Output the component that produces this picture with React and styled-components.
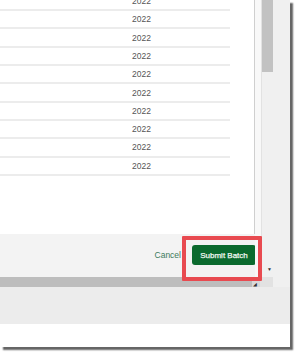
import styled, { createGlobalStyle } from "styled-components";

const GlobalStyle = createGlobalStyle`
    html, body {
        margin: 0;
        padding: 0;
        background: #ffffff;
        font-family: "Liberation Sans", Arial, sans-serif;
    }
`;

const Page = styled.div`
    position: relative;
    width: 300px;
    height: 357px;
    overflow: hidden;
    background: #ffffff;
`;

const Window = styled.div`
    width: 290px;
    height: 347px;
    display: flex;
    flex-direction: column;
    background: #ffffff;
    box-shadow: 3px 3px 1.5px rgba(0, 0, 0, 0.6);
`;

const Top = styled.div`
    display: flex;
    height: 277px;
`;

const Main = styled.div`
    width: 255px;
    display: flex;
    flex-direction: column;
`;

const Panel = styled.div`
    height: 234px;
    background: #ffffff;
    border-right: 1px solid #cfcfcf;
    overflow: hidden;
`;

const Rows = styled.div`
    margin-top: -7.3px;
`;

const Row = styled.div`
    width: 230px;
    height: 18.33px;
    box-sizing: border-box;
    border-bottom: 2px solid #ececec;
    display: flex;
    align-items: center;
    padding-left: 132px;
`;

const Year = styled.span`
    font-size: 8.5px;
    color: #555555;
`;

const Footer = styled.div`
    flex: 1;
    background: #f3f3f3;
    display: flex;
    justify-content: flex-end;
    align-items: center;
    gap: 11px;
    padding-bottom: 1px;
`;

const Cancel = styled.span`
    font-size: 8.5px;
    color: #3c7a5c;
`;

const SubmitButton = styled.button`
    width: 64px;
    height: 20px;
    margin-right: -1px;
    border: none;
    border-radius: 3px;
    background: #0b6a2e;
    color: #f2f8f2;
    font-family: "Liberation Sans", Arial, sans-serif;
    font-size: 8px;
    font-weight: normal;
    -webkit-text-stroke: 0.25px #f2f8f2;
    padding: 0;
`;

const VScroll = styled.div`
    flex: 1;
    display: flex;
    background: #f0f0f0;
`;

const ScrollEdge = styled.div`
    width: 6px;
    background: #f8f8f8;
    border-right: 1px solid #e2e2e2;
`;

const Track = styled.div`
    flex: 1;
    display: flex;
    flex-direction: column;
    justify-content: space-between;
    align-items: flex-start;
    padding-bottom: 5px;
`;

const Thumb = styled.div`
    width: 11px;
    height: 72px;
    background: #c2c2c2;
`;

const Arrow = styled.span`
    font-size: 5px;
    line-height: 5px;
    color: #333333;
    margin-left: ${(p) => p.$left || 0}px;
`;

const HScroll = styled.div`
    height: 10px;
    display: flex;
    background: #f0f0f0;
`;

const HBand = styled.div`
    width: 252px;
    background: #bdbdbd;
`;

const HEnd = styled.div`
    width: 8px;
    background: #d8d8d8;
    display: flex;
    align-items: flex-end;
`;

const Corner = styled.div`
    width: 13px;
    background: #e2e2e2;
`;

const Bottom = styled.div`
    height: 37px;
    background: #ececec;
`;

const Spare = styled.div`
    flex: 1;
    background: #ffffff;
`;

const Highlight = styled.div`
    position: absolute;
    left: 182px;
    top: 236px;
    width: 80px;
    height: 45px;
    box-sizing: border-box;
    border: 4px solid #e84a50;
    border-radius: 1px;
`;

const years = Array.from({ length: 10 }, () => "2022");

export default function App() {
    return (
        <Page>
            <GlobalStyle />
            <Window>
                <Top>
                    <Main>
                        <Panel>
                            <Rows>
                                {years.map((y, i) => (
                                    <Row key={i}>
                                        <Year>{y}</Year>
                                    </Row>
                                ))}
                            </Rows>
                        </Panel>
                        <Footer>
                            <Cancel>Cancel</Cancel>
                            <SubmitButton>Submit Batch</SubmitButton>
                        </Footer>
                    </Main>
                    <VScroll>
                        <ScrollEdge />
                        <Track>
                            <Thumb />
                            <Arrow $left={5}>▼</Arrow>
                        </Track>
                    </VScroll>
                </Top>
                <HScroll>
                    <HBand />
                    <HEnd>
                        <Arrow $left={1}>◢</Arrow>
                    </HEnd>
                    <Corner />
                </HScroll>
                <Bottom />
                <Spare />
            </Window>
            <Highlight />
        </Page>
    );
}
